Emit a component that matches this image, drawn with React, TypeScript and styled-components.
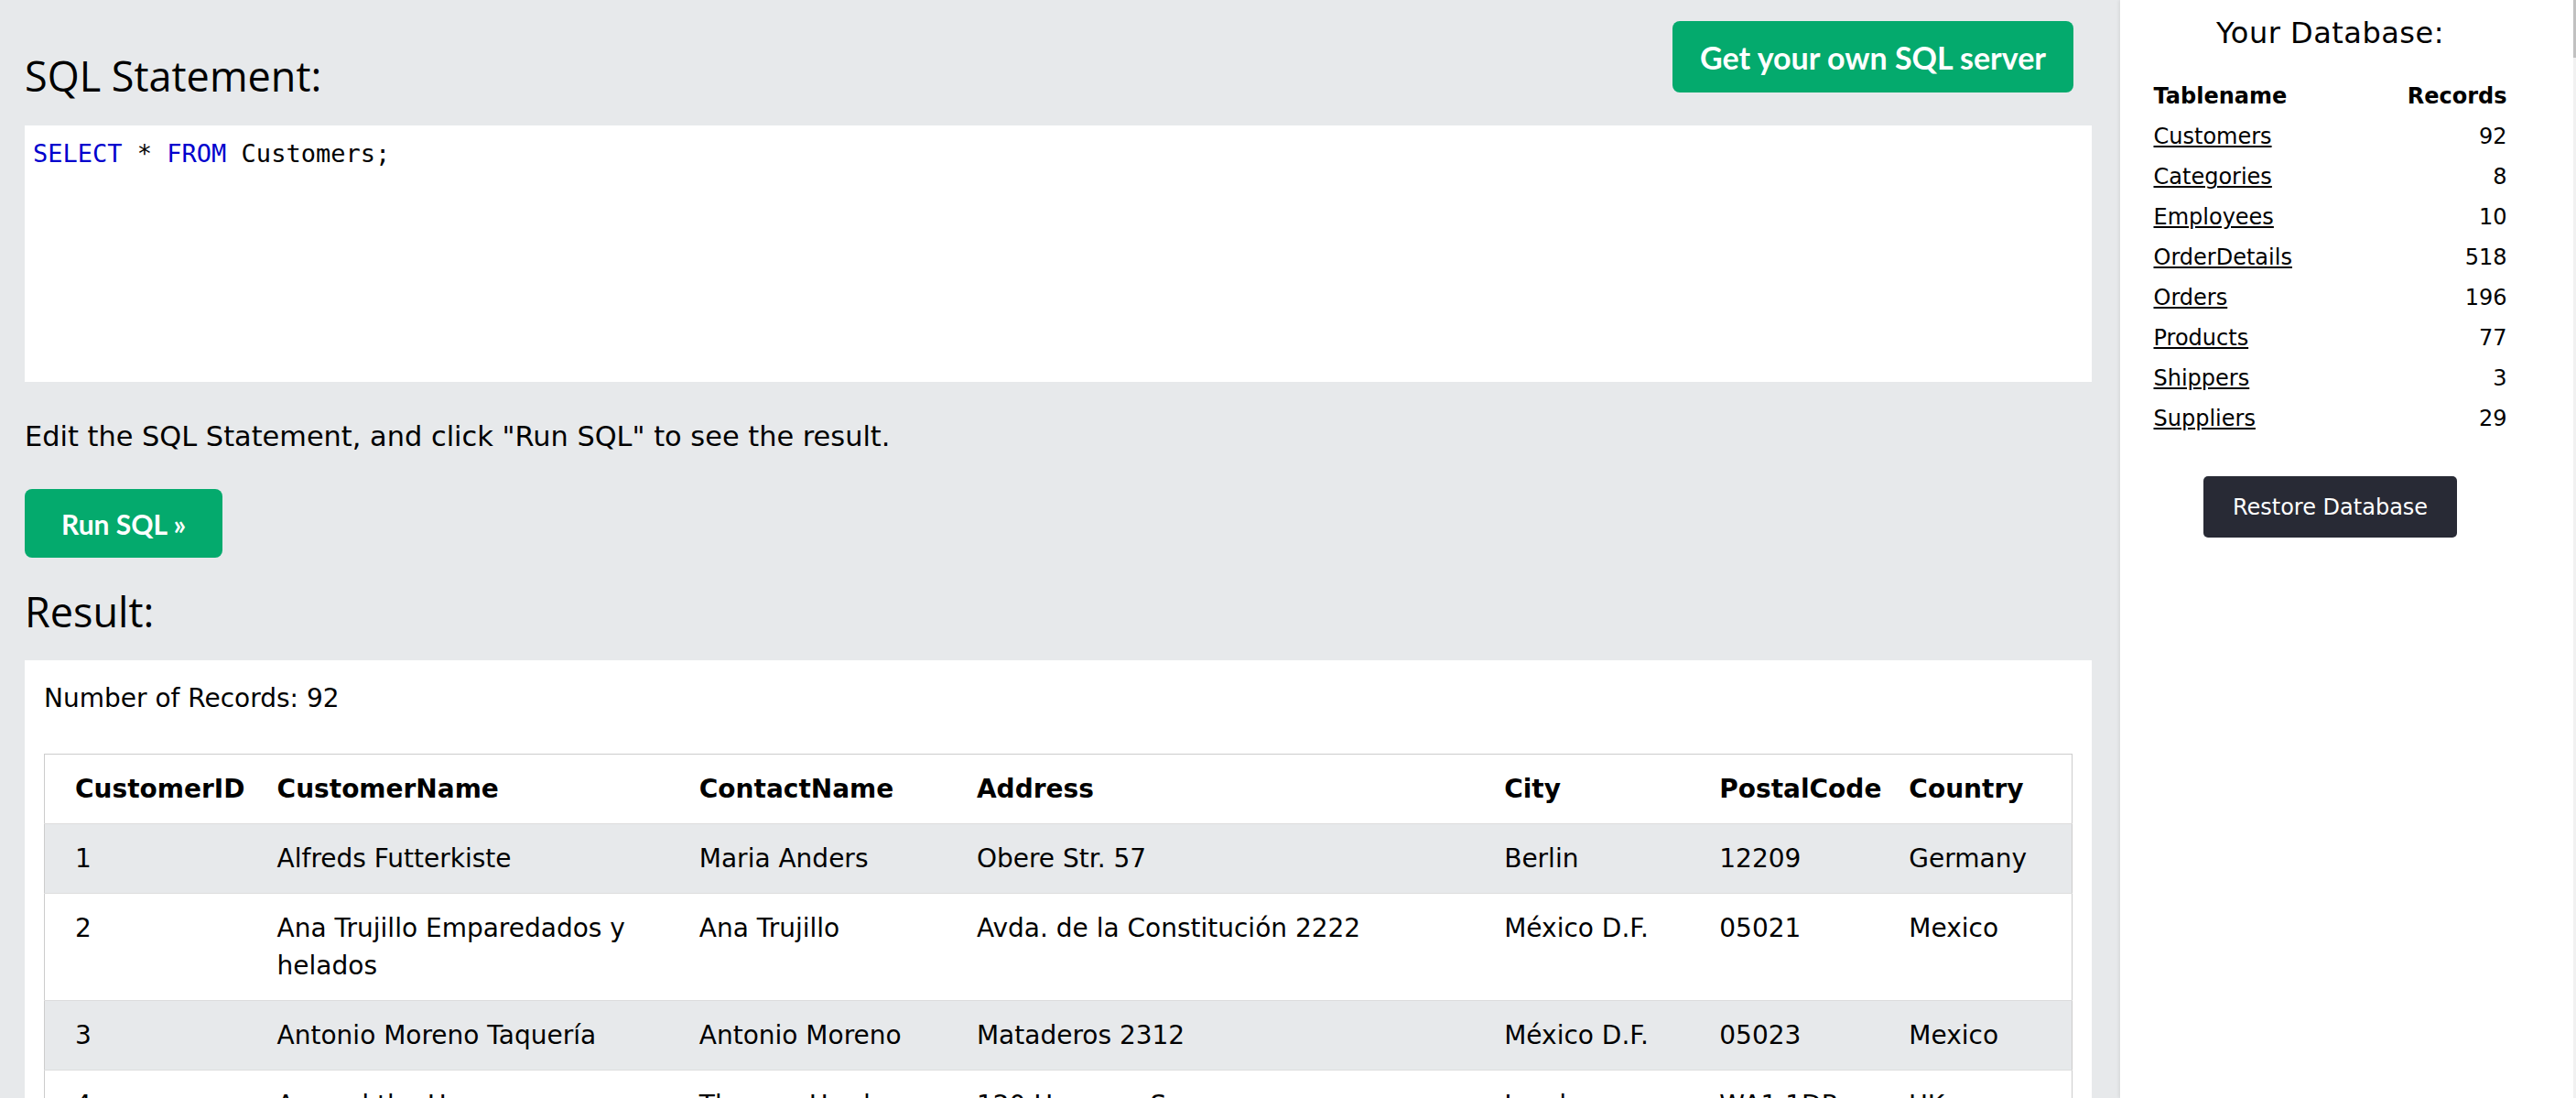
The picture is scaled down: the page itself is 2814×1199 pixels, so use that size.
import React from "react";
import styled, { createGlobalStyle } from "styled-components";

const GlobalStyle = createGlobalStyle`
  html, body {
    margin: 0;
    height: 100%;
    overflow: hidden;
  }
  body {
    font-family: "DejaVu Sans", Verdana, sans-serif;
    color: #000;
    background: #e7e9eb;
  }
`;

type Customer = [string, string, string, string, string, string, string];

const columns = [
  { name: "CustomerID", width: 237 },
  { name: "CustomerName", width: 461 },
  { name: "ContactName", width: 303 },
  { name: "Address", width: 576 },
  { name: "City", width: 235 },
  { name: "PostalCode", width: 207 },
  { name: "Country", width: 195 },
];

const customers: Customer[] = [
  ["1", "Alfreds Futterkiste", "Maria Anders", "Obere Str. 57", "Berlin", "12209", "Germany"],
  ["2", "Ana Trujillo Emparedados y helados", "Ana Trujillo", "Avda. de la Constitución 2222", "México D.F.", "05021", "Mexico"],
  ["3", "Antonio Moreno Taquería", "Antonio Moreno", "Mataderos 2312", "México D.F.", "05023", "Mexico"],
  ["4", "Around the Horn", "Thomas Hardy", "120 Hanover Sq.", "London", "WA1 1DP", "UK"],
  ["5", "Berglunds snabbköp", "Christina Berglund", "Berguvsvägen 8", "Luleå", "S-958 22", "Sweden"],
];

const tables: [string, number][] = [
  ["Customers", 92],
  ["Categories", 8],
  ["Employees", 10],
  ["OrderDetails", 518],
  ["Orders", 196],
  ["Products", 77],
  ["Shippers", 3],
  ["Suppliers", 29],
];

function App() {
  return (
    <>
      <GlobalStyle />
      <Page>
        <Main>
          <TopBar>
            <Heading $top={60} $bottom={0}>SQL Statement:</Heading>
            <GreenButton $height={78} $font={34} $pad={30} $right={20} $top={23}>
              Get your own SQL server
            </GreenButton>
          </TopBar>
          <Editor>
            <Keyword>SELECT</Keyword> * <Keyword>FROM</Keyword> Customers;
          </Editor>
          <Hint>Edit the SQL Statement, and click "Run SQL" to see the result.</Hint>
          <GreenButton $height={75} $font={30} $pad={40} $right={0} $top={0}>
            Run SQL »
          </GreenButton>
          <Heading $top={36} $bottom={31}>Result:</Heading>
          <ResultBox>
            <RecordCount>Number of Records: 92</RecordCount>
            <ResultTable>
              <colgroup>
                {columns.map((c) => (
                  <Col key={c.name} $width={c.width} />
                ))}
              </colgroup>
              <thead>
                <tr>
                  {columns.map((c) => (
                    <th key={c.name}>{c.name}</th>
                  ))}
                </tr>
              </thead>
              <tbody>
                {customers.map((row) => (
                  <tr key={row[0]}>
                    {row.map((cell, i) => (
                      <td key={i}>{cell}</td>
                    ))}
                  </tr>
                ))}
              </tbody>
            </ResultTable>
          </ResultBox>
        </Main>
        <Sidebar>
          <SideTitle>Your Database:</SideTitle>
          <DbTable>
            <thead>
              <tr>
                <th>Tablename</th>
                <th>Records</th>
              </tr>
            </thead>
            <tbody>
              {tables.map(([name, count]) => (
                <tr key={name}>
                  <td>
                    <DbLink href="#">{name}</DbLink>
                  </td>
                  <td>{count}</td>
                </tr>
              ))}
            </tbody>
          </DbTable>
          <RestoreButton>Restore Database</RestoreButton>
        </Sidebar>
        <ScrollTrack>
          <ScrollThumb />
        </ScrollTrack>
      </Page>
    </>
  );
}

export default App;

const Page = styled.div`
  display: flex;
  height: 100vh;
`;

const Main = styled.main`
  flex: 1;
  min-width: 0;
  background: #e7e9eb;
  padding: 0 31px 0 27px;
  overflow: hidden;
`;

const TopBar = styled.div`
  display: flex;
  justify-content: space-between;
  align-items: flex-start;
  height: 137px;
`;

const Heading = styled.h2<{ $top: number; $bottom: number }>`
  margin: ${(p) => p.$top}px 0 ${(p) => p.$bottom}px;
  font-family: "Open Sans", sans-serif;
  font-weight: 400;
  font-size: 45px;
  line-height: 1;
`;

const GreenButton = styled.button<{
  $height: number;
  $font: number;
  $pad: number;
  $right: number;
  $top: number;
}>`
  display: block;
  height: ${(p) => p.$height}px;
  margin: ${(p) => p.$top}px ${(p) => p.$right}px 0 0;
  padding: 0 ${(p) => p.$pad}px;
  border: none;
  border-radius: 8px;
  background: #04aa6d;
  color: #fff;
  font-family: Lato, sans-serif;
  font-weight: 700;
  font-size: ${(p) => p.$font}px;
`;

const Editor = styled.div`
  height: 280px;
  box-sizing: border-box;
  padding: 13px 9px;
  background: #fff;
  font-family: "DejaVu Sans Mono", "Liberation Mono", monospace;
  font-size: 27px;
  line-height: 35px;
  white-space: pre;
`;

const Keyword = styled.span`
  color: #0000cd;
`;

const Hint = styled.p`
  margin: 39px 0 36px;
  font-size: 30.4px;
  line-height: 42px;
`;

const ResultBox = styled.section`
  background: #fff;
  padding: 21px 21px 0;
  min-height: 600px;
`;

const RecordCount = styled.div`
  font-size: 28px;
  line-height: 42px;
  margin-bottom: 39px;
`;

const ResultTable = styled.table`
  width: 100%;
  table-layout: fixed;
  border-collapse: collapse;
  border: 1px solid #ccc;
  font-size: 28px;
  line-height: 41px;

  th,
  td {
    text-align: left;
    vertical-align: top;
    padding: 17px;
  }
  th:first-child,
  td:first-child {
    padding-left: 33px;
  }
  th {
    font-weight: 700;
  }
  tr {
    border-bottom: 1px solid #ddd;
  }
  tbody tr:nth-child(odd) {
    background: #e7e9eb;
  }
`;

const Col = styled.col<{ $width: number }>`
  width: ${(p) => p.$width}px;
`;

const Sidebar = styled.aside`
  width: 495px;
  flex-shrink: 0;
  box-sizing: border-box;
  padding: 17px 36px 0 0;
  background: #fff;
  box-shadow: -2px 0 3px rgba(0, 0, 0, 0.06);
  display: flex;
  flex-direction: column;
  align-items: center;
`;

const SideTitle = styled.h3`
  margin: 0 0 28px;
  font-weight: 400;
  font-size: 32px;
  line-height: 1.2;
  letter-spacing: 0.5px;
`;

const DbTable = styled.table`
  width: 386px;
  border-collapse: collapse;
  font-size: 24px;
  line-height: 44px;

  th,
  td {
    padding: 0;
    text-align: left;
  }
  th:last-child,
  td:last-child {
    text-align: right;
  }
`;

const DbLink = styled.a`
  color: #000;
  text-decoration: underline;
`;

const RestoreButton = styled.button`
  margin-top: 41px;
  width: 277px;
  height: 67px;
  border: none;
  border-radius: 5px;
  background: #282a35;
  color: #fff;
  font-family: "DejaVu Sans", Verdana, sans-serif;
  font-size: 24px;
`;

const ScrollTrack = styled.div`
  width: 3px;
  flex-shrink: 0;
  background: #f1f1f1;
`;

const ScrollThumb = styled.div`
  height: 63px;
  background: #c1c1c1;
`;
